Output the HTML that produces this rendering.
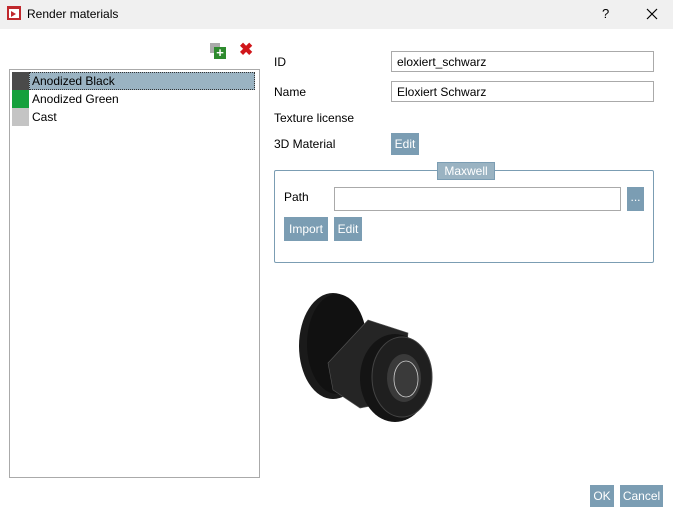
<html><head><style>
body{margin:0;width:673px;height:517px;background:#fff;font-family:"Segoe UI","Liberation Sans",sans-serif;font-size:12px;color:#000;position:relative;overflow:hidden}
.a{position:absolute}
.btn{position:absolute;background:#7b9db3;color:#fff;font-size:12px;text-align:center;line-height:22px}
.inp{position:absolute;border:1px solid #aaa;background:#fff;height:21px;line-height:21px;padding-left:5px;box-sizing:border-box}
</style></head><body>
<div class="a" style="left:0;top:0;width:673px;height:29px;background:#f0f0f0"></div>
<div class="a" style="left:7px;top:6px;width:14px;height:14px;background:#c0282d"><div class="a" style="left:2px;top:3px;width:10px;height:9px;background:#fff"></div><div class="a" style="left:4px;top:5px;width:0;height:0;border-left:5px solid #c0282d;border-top:3px solid transparent;border-bottom:3px solid transparent"></div></div>
<div class="a" style="left:27px;top:7px;font-size:12px">Render materials</div>
<div class="a" style="left:602px;top:6px;font-size:13px">?</div>
<svg class="a" style="left:646px;top:8px" width="12" height="12"><path d="M1 1L11 11M11 1L1 11" stroke="#000" stroke-width="1.2"/></svg>
<div class="a" style="left:210px;top:43px;width:10px;height:10px;background:#aaa"></div>
<div class="a" style="left:214px;top:47px;width:12px;height:12px;background:#2e8b2e;color:#fff;font-size:13px;line-height:11px;text-align:center;font-weight:bold">+</div>
<div class="a" style="left:239px;top:40px;color:#d0161a;font-size:17px;font-weight:bold">✖</div>
<div class="a" style="left:9px;top:69px;width:249px;height:407px;border:1px solid #aaa"></div>
<div class="a" style="left:12px;top:72px;width:17px;height:18px;background:#4a4a4a"></div>
<div class="a" style="left:29px;top:72px;width:224px;height:16px;background:#9ab3c2;border:1px dotted #333"></div>
<div class="a" style="left:32px;top:74px">Anodized Black</div>
<div class="a" style="left:12px;top:90px;width:17px;height:18px;background:#15a03c"></div>
<div class="a" style="left:32px;top:92px">Anodized Green</div>
<div class="a" style="left:12px;top:108px;width:17px;height:18px;background:#c4c4c4"></div>
<div class="a" style="left:32px;top:110px">Cast</div>
<div class="a" style="left:274px;top:55px">ID</div>
<div class="inp" style="left:391px;top:51px;width:263px">eloxiert_schwarz</div>
<div class="a" style="left:274px;top:85px">Name</div>
<div class="inp" style="left:391px;top:81px;width:263px">Eloxiert Schwarz</div>
<div class="a" style="left:274px;top:111px">Texture license</div>
<div class="a" style="left:274px;top:137px">3D Material</div>
<div class="btn" style="left:391px;top:133px;width:28px">Edit</div>
<div class="a" style="left:274px;top:170px;width:378px;height:91px;border:1px solid #7b9db3;border-radius:2px"></div>
<div class="a" style="left:437px;top:162px;width:56px;height:16px;background:#9ab3c2;border:1px solid #7b9db3;color:#fff;text-align:center;line-height:16px">Maxwell</div>
<div class="a" style="left:284px;top:190px">Path</div>
<div class="inp" style="left:334px;top:187px;width:287px;height:24px"></div>
<div class="btn" style="left:627px;top:187px;width:17px;height:24px;line-height:20px">...</div>
<div class="btn" style="left:284px;top:217px;width:44px;height:24px;line-height:24px">Import</div>
<div class="btn" style="left:334px;top:217px;width:28px;height:24px;line-height:24px">Edit</div>
<svg class="a" style="left:290px;top:280px" width="160" height="150">
<ellipse cx="43" cy="66" rx="34" ry="53" fill="#1a1a1a"/>
<ellipse cx="47" cy="64" rx="30" ry="50" fill="#111"/>
<polygon points="38,83 78,40 118,53 112,120 70,128 43,110" fill="#252525" stroke="#555" stroke-width="0.6"/>
<ellipse cx="105" cy="98" rx="35" ry="44" fill="#141414"/>
<ellipse cx="112" cy="97" rx="30" ry="40" fill="#1f1f1f" stroke="#444"/>
<ellipse cx="114" cy="98" rx="17" ry="24" fill="#3a3a3a"/>
<ellipse cx="116" cy="99" rx="12" ry="18" fill="none" stroke="#ccc" stroke-width="0.8"/>
</svg>
<div class="btn" style="left:590px;top:485px;width:24px">OK</div>
<div class="btn" style="left:620px;top:485px;width:43px">Cancel</div>
</body></html>
